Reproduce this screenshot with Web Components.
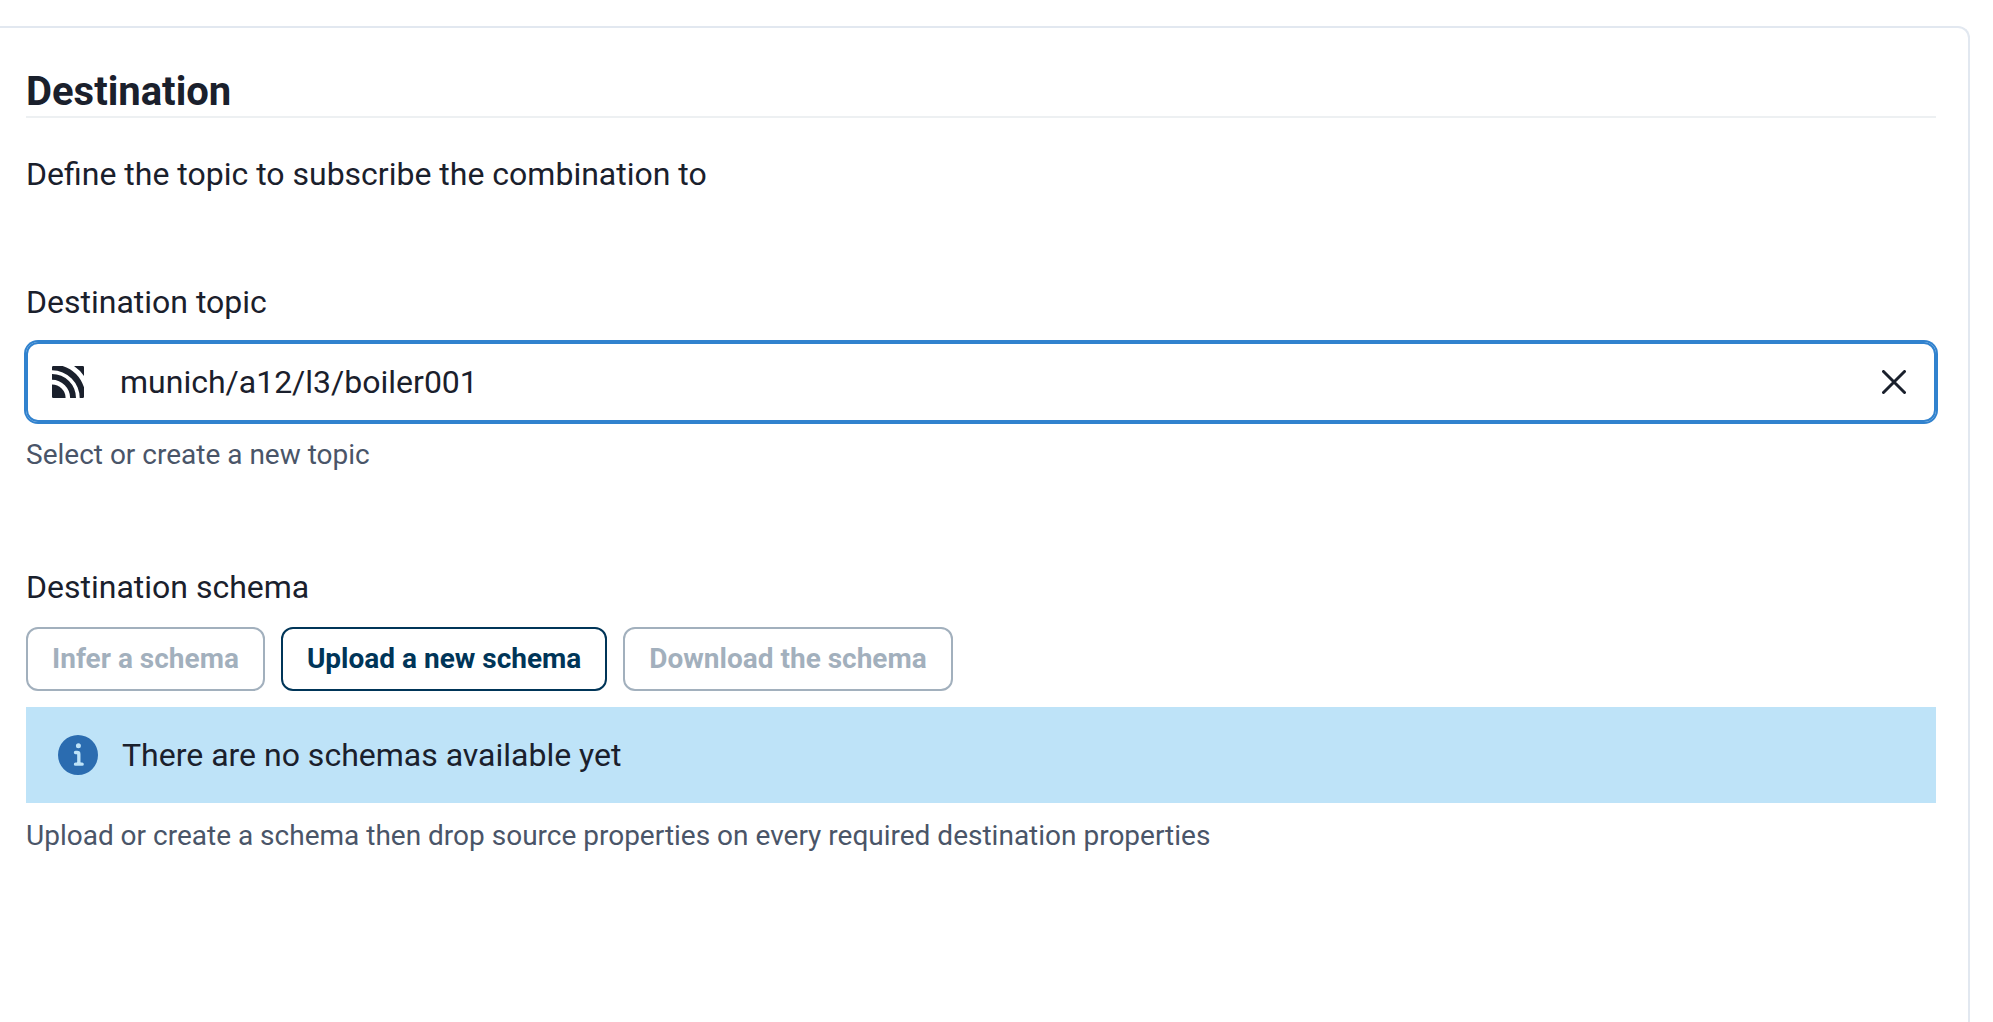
<!DOCTYPE html>
<html lang="en">
<head>
<meta charset="utf-8">
<title>Destination</title>
<style>
  body {
    display: flow-root;
    margin: 0;
    background: #ffffff;
    color: #1a202c;
    font-family: Roboto, sans-serif;
    font-size: 32px;
    line-height: 48px;
  }
</style>
</head>
<body>
<destination-panel></destination-panel>

<script>
const define = (name, html, setup) => {
  const template = document.createElement('template');
  template.innerHTML = html;

  customElements.define(name, class extends HTMLElement {
    constructor() {
      super();
      this.attachShadow({ mode: 'open' });
      this.shadowRoot.appendChild(template.content.cloneNode(true));
    }

    connectedCallback() {
      if (setup) setup(this, this.shadowRoot);
    }
  });
};

// Card with a title and an underline, open at the left and bottom
define('panel-card', `
<style>
  :host {
    display: block;
    box-sizing: border-box;
    min-height: calc(100vh - 26px);
    margin: 26px 23px 0 0;
    padding: 40px 32px 32px 26px;
    border: 2px solid #e2e8f0;
    border-left: none;
    border-bottom: none;
    border-top-right-radius: 12px;
  }

  header {
    border-bottom: 2px solid #edf0f2;
    margin-bottom: 32px;
  }

  ::slotted(h2) {
    margin: 0;
    font-size: 40px;
    font-weight: 700;
    line-height: 48px;
  }
</style>
<header><slot name="title"></slot></header>
<slot></slot>`);

// Muted line below a field
define('helper-text', `
<style>
  :host {
    display: block;
    margin-top: 16px;
    color: #4a5568;
    font-size: 28px;
    line-height: 33px;
  }
</style>
<slot></slot>`);

// Topic text box with its icon and a clear button
define('topic-input', `
<style>
  :host {
    display: block;
  }

  label {
    display: block;
    margin-bottom: 16px;
  }

  .box {
    display: flex;
    align-items: center;
    box-sizing: border-box;
    height: 80px;
    padding: 0 24px;
    border: 2px solid #3182ce;
    border-radius: 12px;
    box-shadow: 0 0 0 2px #3182ce;
  }

  input {
    flex: 1;
    min-width: 0;
    height: 48px;
    margin: 0 16px 0 36px;
    padding: 0;
    border: none;
    outline: none;
    background: none;
    color: inherit;
    font: inherit;
  }

  button {
    display: flex;
    align-items: center;
    justify-content: center;
    width: 32px;
    height: 48px;
    padding: 0;
    border: none;
    background: none;
    color: inherit;
    cursor: pointer;
  }

  svg {
    display: block;
    flex: none;
  }
</style>
<label for="topic"><slot></slot></label>
<div class="box">
  <svg width="32" height="32" viewBox="0 0 24 24" fill="currentColor" aria-hidden="true">
    <path d="M0 13.800A10.200 10.200 0 0 1 10.200 24H1a1 1 0 0 1-1-1Z"/>
    <path d="M0 6A18 18 0 0 1 18 24H13.600A13.600 13.600 0 0 0 0 10.400Z"/>
    <path d="M0 1a1 1 0 0 1 1-1H8A25.300 25.300 0 0 1 24 16V23a1 1 0 0 1-1 1H20.800A20.800 20.800 0 0 0 0 3.200Z"/>
    <path d="M16.500 0H23a1 1 0 0 1 1 1V7.500A29.100 29.100 0 0 0 16.500 0Z"/>
  </svg>
  <input id="topic" type="text">
  <button type="button" aria-label="Clear">
    <svg width="24" height="24" viewBox="0 0 24 24" fill="none" stroke="currentColor" stroke-width="3" stroke-linecap="round" aria-hidden="true">
      <path d="M1.500 1.500 22.500 22.500M22.500 1.500 1.500 22.500"/>
    </svg>
  </button>
</div>`, (host, root) => {
  const input = root.querySelector('input');
  input.value = host.getAttribute('value') || '';
  root.querySelector('button').addEventListener('click', () => {
    input.value = '';
    input.focus();
  });
});

define('outline-button', `
<style>
  :host {
    display: block;
  }

  button {
    height: 64px;
    padding: 0 24px;
    border: 2px solid #003558;
    border-radius: 12px;
    background: #ffffff;
    color: #003558;
    font-family: inherit;
    font-size: 28px;
    font-weight: 700;
    line-height: 32px;
    white-space: nowrap;
    cursor: pointer;
  }

  button:disabled {
    opacity: 0.4;
    border-color: #183b5c;
    color: #183b5c;
    cursor: not-allowed;
  }
</style>
<button type="button"><slot></slot></button>`, (host, root) => {
  root.querySelector('button').disabled = host.hasAttribute('disabled');
});

define('info-alert', `
<style>
  :host {
    display: flex;
    align-items: center;
    gap: 24px;
    padding: 24px 32px;
    background: #bee3f8;
  }

  svg {
    flex: none;
    color: #2b6cb0;
  }
</style>
<svg width="40" height="40" viewBox="0 0 24 24" fill="currentColor" aria-hidden="true">
  <path d="M12,0A12,12,0,1,0,24,12,12.013,12.013,0,0,0,12,0Zm.25,5a1.5,1.5,0,1,1-1.5,1.5A1.5,1.5,0,0,1,12.25,5ZM14.5,18.5h-4a1,1,0,0,1,0-2h.75a.25.25,0,0,0,.25-.25v-4.5a.25.25,0,0,0-.25-.25H10.5a1,1,0,0,1,0-2h1a2,2,0,0,1,2,2v4.75a.25.25,0,0,0,.25.25h.75a1,1,0,1,1,0,2Z"/>
</svg>
<span><slot></slot></span>`);

define('destination-panel', `
<style>
  :host {
    display: block;
  }

  p {
    margin: 0;
  }

  section {
    margin-top: 80px;
  }

  .schema {
    margin-top: 92px;
  }

  .buttons {
    display: flex;
    gap: 16px;
    margin: 16px 0;
  }
</style>
<panel-card>
  <h2 slot="title">Destination</h2>
  <p>Define the topic to subscribe the combination to</p>
  <section>
    <topic-input value="munich/a12/l3/boiler001">Destination topic</topic-input>
    <helper-text>Select or create a new topic</helper-text>
  </section>
  <section class="schema">
    <div id="schema-label">Destination schema</div>
    <div class="buttons" role="group" aria-labelledby="schema-label">
      <outline-button disabled>Infer a schema</outline-button>
      <outline-button>Upload a new schema</outline-button>
      <outline-button disabled>Download the schema</outline-button>
    </div>
    <info-alert>There are no schemas available yet</info-alert>
    <helper-text>Upload or create a schema then drop source properties on every required destination properties</helper-text>
  </section>
</panel-card>`);
</script>
</body>
</html>
